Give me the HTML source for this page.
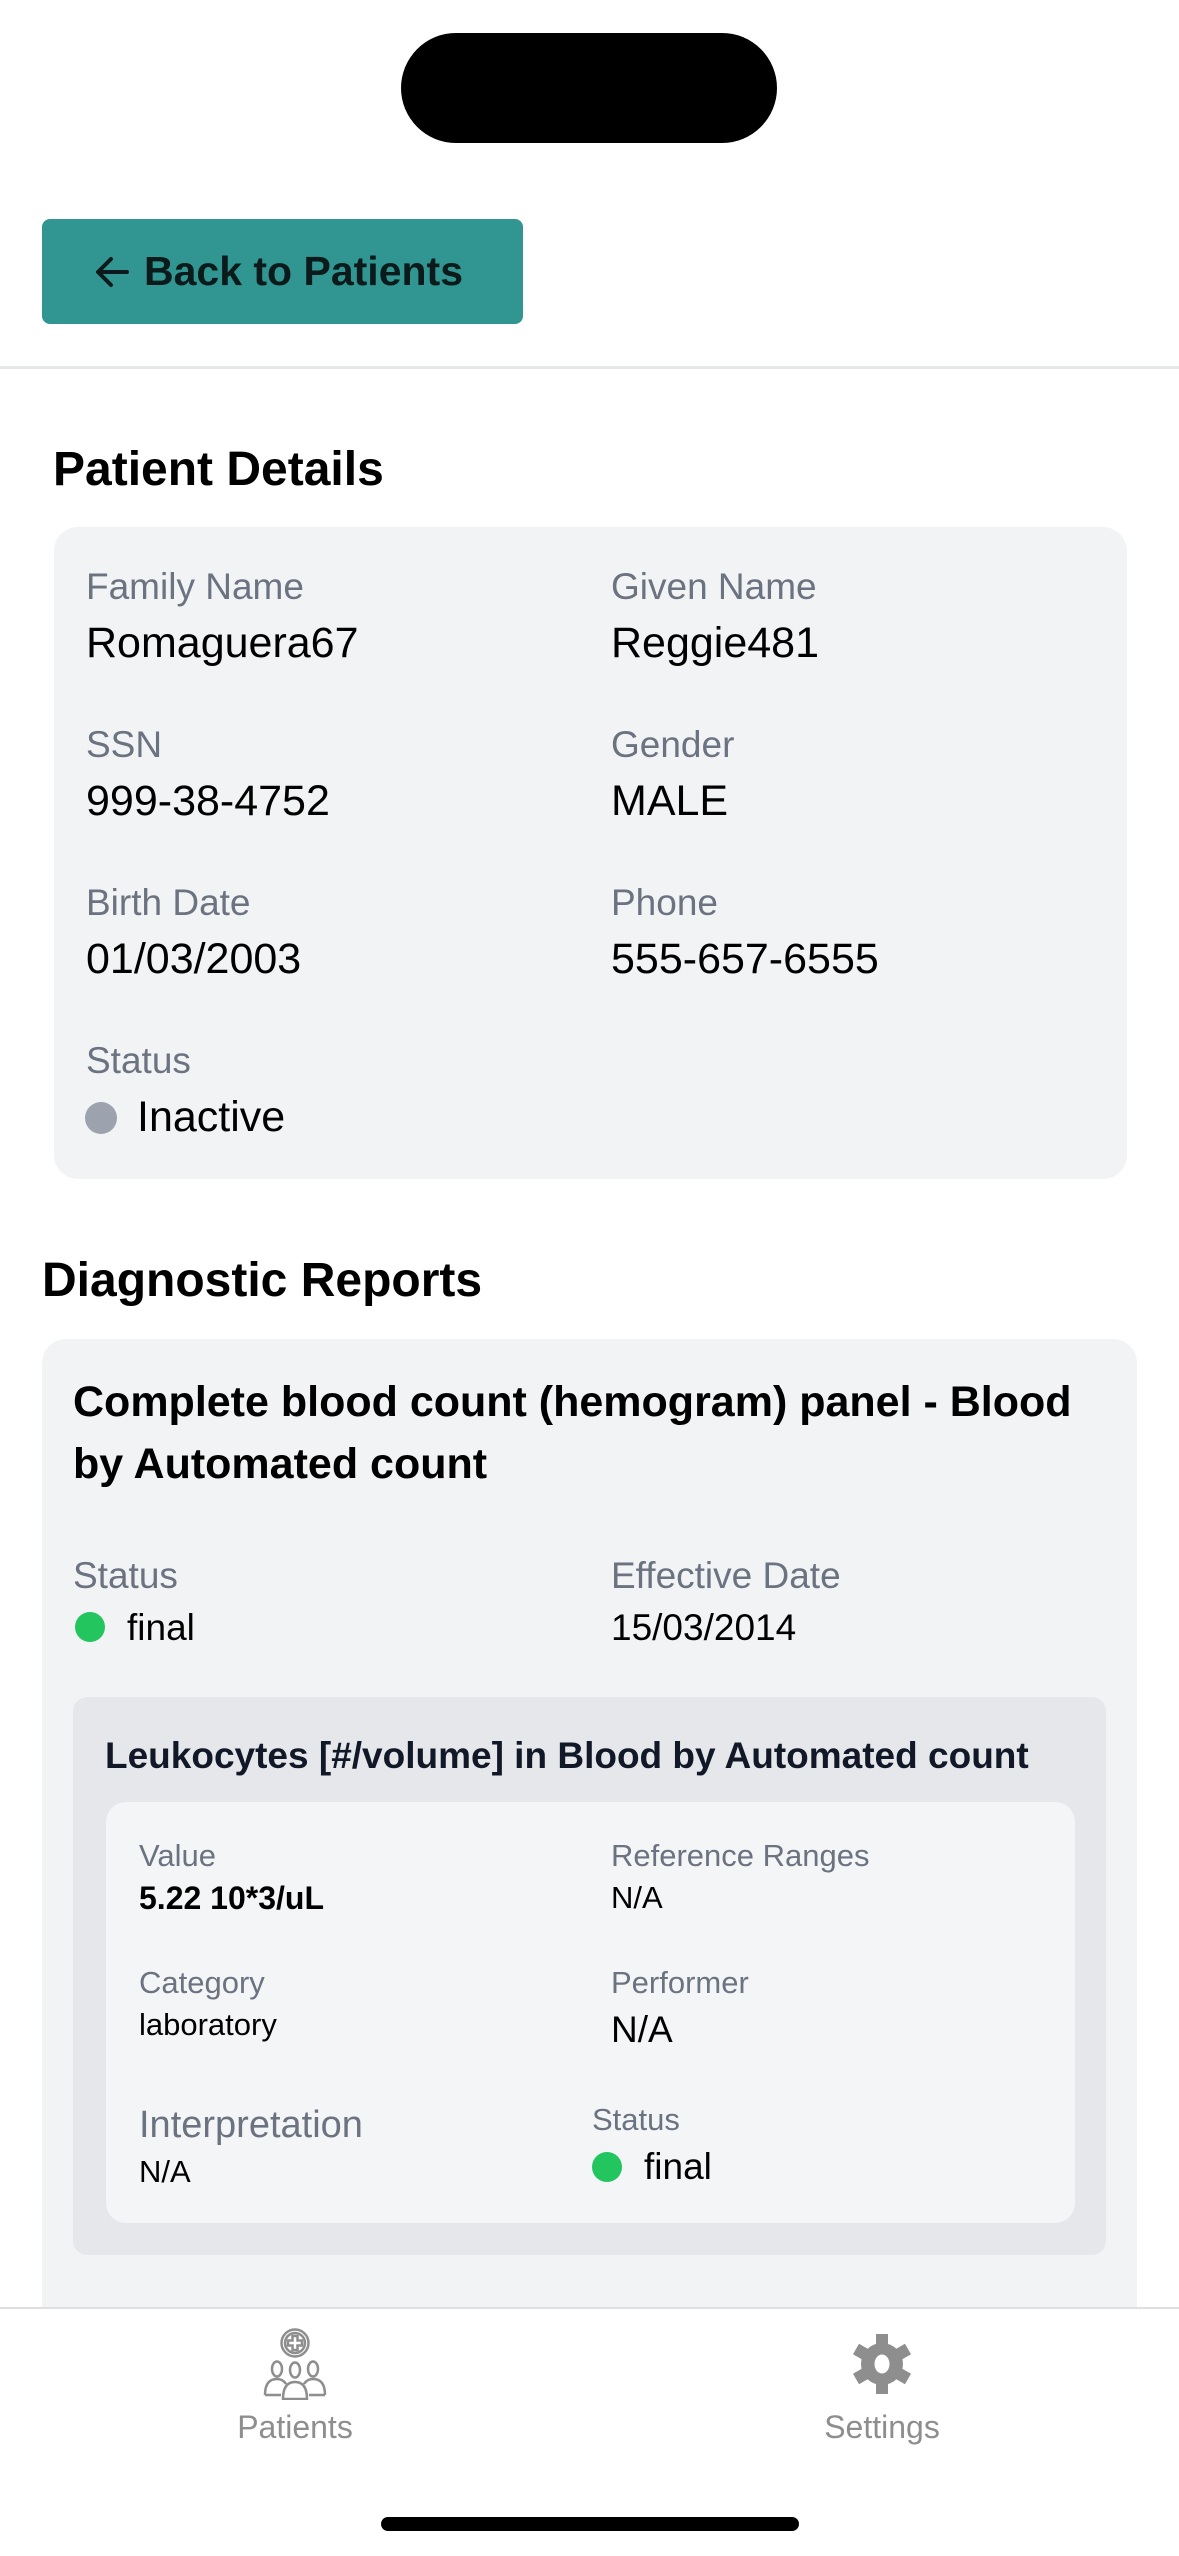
<!DOCTYPE html>
<html><head><meta charset="utf-8"><style>
*{margin:0;padding:0;box-sizing:border-box}
body{width:1179px;height:2556px;background:#fff;position:relative;overflow:hidden;font-family:"Liberation Sans",sans-serif;color:#000}
.a{position:absolute}
.t{position:absolute;line-height:1;white-space:nowrap}
.lb{color:#6b7280;font-size:37px}
.v{font-size:43px}
.s{font-size:31px}
.dot{position:absolute;border-radius:50%}
.c{text-align:center;width:240px}
</style></head><body>
<div class="a" style="left:401px;top:33px;width:376px;height:110px;background:#000;border-radius:55px"></div>
<div class="a" style="left:42px;top:219px;width:481px;height:105px;background:#319692;border-radius:8px"></div>
<svg class="a" style="left:95px;top:255px" width="36" height="34" viewBox="0 0 36 34" fill="none" stroke="#0b1a1a" stroke-width="4" stroke-linecap="round" stroke-linejoin="round"><path d="M32 17H4M16 4L3 17l13 13"/></svg>
<div class="t" style="left:144px;top:251px;font-size:41px;font-weight:bold;color:#0b1a1a">Back to Patients</div>
<div class="a" style="left:0;top:366px;width:1179px;height:3px;background:#e5e7eb"></div>

<div class="t" style="left:53px;top:446px;font-size:48px;font-weight:bold">Patient Details</div>
<div class="a" style="left:54px;top:527px;width:1073px;height:652px;background:#f2f3f5;border-radius:24px"></div>
<div class="t lb" style="left:86px;top:568px">Family Name</div>
<div class="t v" style="left:86px;top:622px">Romaguera67</div>
<div class="t lb" style="left:611px;top:568px">Given Name</div>
<div class="t v" style="left:611px;top:622px">Reggie481</div>
<div class="t lb" style="left:86px;top:726px">SSN</div>
<div class="t v" style="left:86px;top:780px">999-38-4752</div>
<div class="t lb" style="left:611px;top:726px">Gender</div>
<div class="t v" style="left:611px;top:780px">MALE</div>
<div class="t lb" style="left:86px;top:884px">Birth Date</div>
<div class="t v" style="left:86px;top:938px">01/03/2003</div>
<div class="t lb" style="left:611px;top:884px">Phone</div>
<div class="t v" style="left:611px;top:938px">555-657-6555</div>
<div class="t lb" style="left:86px;top:1042px">Status</div>
<div class="dot" style="left:85px;top:1102px;width:32px;height:32px;background:#9ca3af"></div>
<div class="t v" style="left:137px;top:1096px">Inactive</div>

<div class="t" style="left:42px;top:1257px;font-size:48px;font-weight:bold">Diagnostic Reports</div>
<div class="a" style="left:42px;top:1339px;width:1095px;height:1100px;background:#f2f3f5;border-radius:24px"></div>
<div class="t" style="left:73px;top:1371px;font-size:43px;font-weight:bold;line-height:62px;white-space:normal;width:1030px">Complete blood count (hemogram) panel - Blood by Automated count</div>
<div class="t lb" style="left:73px;top:1557px">Status</div>
<div class="dot" style="left:75px;top:1612px;width:30px;height:30px;background:#22c55e"></div>
<div class="t" style="left:127px;top:1609px;font-size:37px">final</div>
<div class="t lb" style="left:611px;top:1557px">Effective Date</div>
<div class="t" style="left:611px;top:1609px;font-size:37px">15/03/2014</div>

<div class="a" style="left:73px;top:1697px;width:1033px;height:558px;background:#e5e7eb;border-radius:14px"></div>
<div class="t" style="left:105px;top:1737px;font-size:37px;font-weight:bold;color:#111827">Leukocytes [#/volume] in Blood by Automated count</div>
<div class="a" style="left:106px;top:1802px;width:969px;height:421px;background:#f4f5f7;border-radius:20px"></div>
<div class="t lb s" style="left:139px;top:1840px">Value</div>
<div class="t" style="left:139px;top:1882px;font-weight:bold;font-size:32px">5.22 10*3/uL</div>
<div class="t lb s" style="left:611px;top:1840px">Reference Ranges</div>
<div class="t s" style="left:611px;top:1882px">N/A</div>
<div class="t lb s" style="left:139px;top:1967px">Category</div>
<div class="t s" style="left:139px;top:2009px">laboratory</div>
<div class="t lb s" style="left:611px;top:1967px">Performer</div>
<div class="t" style="left:611px;top:2011px;font-size:37px">N/A</div>
<div class="t lb" style="left:139px;top:2106px;font-size:38px">Interpretation</div>
<div class="t s" style="left:139px;top:2156px">N/A</div>
<div class="t lb s" style="left:592px;top:2104px">Status</div>
<div class="dot" style="left:592px;top:2152px;width:30px;height:30px;background:#22c55e"></div>
<div class="t" style="left:644px;top:2148px;font-size:37px">final</div>

<div class="a" style="left:0;top:2307px;width:1179px;height:249px;background:#fff;border-top:2px solid #e0e0e0"></div>
<svg class="a" style="left:259px;top:2328px" width="72" height="72" viewBox="0 0 72 72" fill="none" stroke="#8e8e8e" stroke-width="2.5">
<circle cx="36" cy="15" r="13.5"/><circle cx="36" cy="15" r="10"/>
<path d="M33.5 8h5v4.5h4.5v5h-4.5v4.5h-5v-4.5h-4.5v-5h4.5z"/>
<ellipse cx="18" cy="41" rx="5" ry="7.5"/><ellipse cx="36" cy="42" rx="5" ry="7.5"/><ellipse cx="54" cy="41" rx="5" ry="7.5"/>
<path d="M6 67q0-16 12-16q6 0 9 5M66 67q0-16-12-16q-6 0-9 5M6 67h16M50 67h16"/>
<path d="M24 71q0-17 12-17q12 0 12 17z"/>
</svg>
<div class="t c" style="left:175px;top:2411px;font-size:32px;color:#8e8e8e">Patients</div>
<svg class="a" style="left:852px;top:2334px" width="60" height="60" viewBox="0 0 60 60">
<g fill="#8e8e8e" transform="translate(30 30)">
<circle r="21"/>
<rect x="-6" y="-30" width="12" height="14"/><rect x="-6" y="-30" width="12" height="14" transform="rotate(60)"/><rect x="-6" y="-30" width="12" height="14" transform="rotate(120)"/><rect x="-6" y="-30" width="12" height="14" transform="rotate(180)"/><rect x="-6" y="-30" width="12" height="14" transform="rotate(240)"/><rect x="-6" y="-30" width="12" height="14" transform="rotate(300)"/>
<ellipse rx="7.5" ry="9.5" fill="#fff"/>
</g></svg>
<div class="t c" style="left:762px;top:2411px;font-size:32px;color:#8e8e8e">Settings</div>
<div class="a" style="left:381px;top:2517px;width:418px;height:14px;background:#000;border-radius:7px"></div>
</body></html>
